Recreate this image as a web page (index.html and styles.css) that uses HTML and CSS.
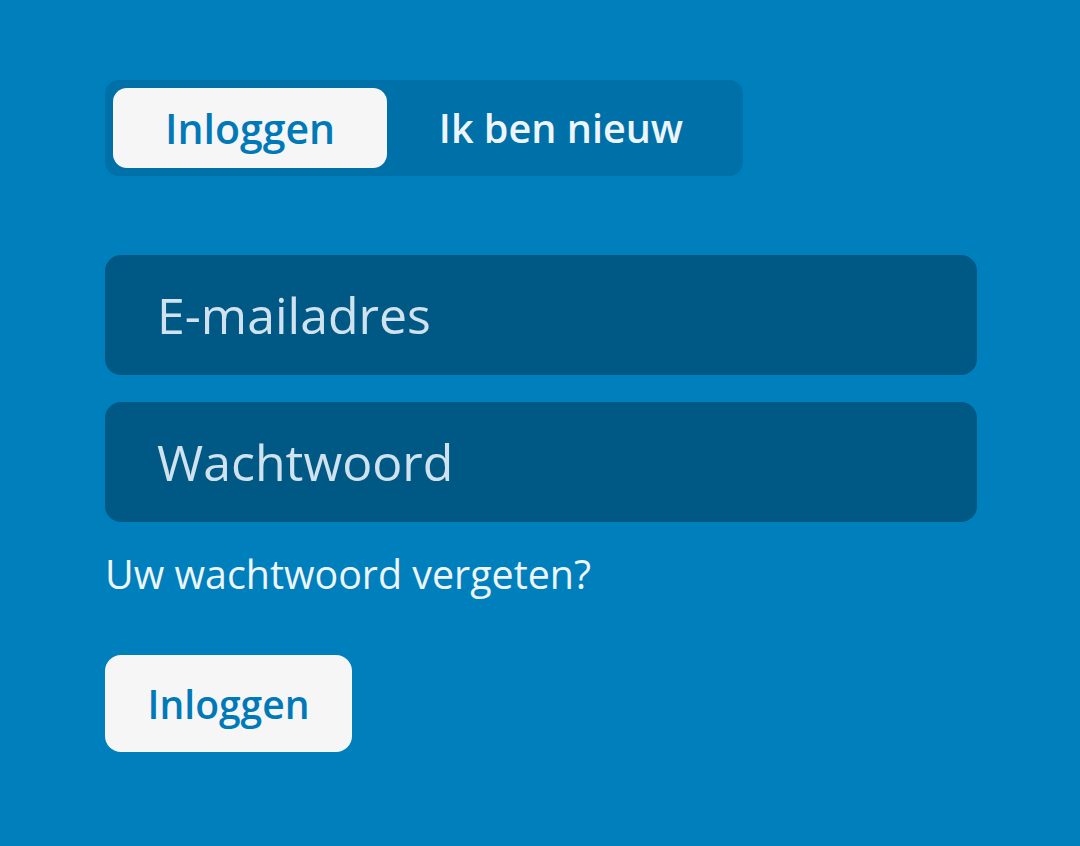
FILE: index.html
```html
<!DOCTYPE html>
<html lang="nl">
<head>
  <meta charset="UTF-8">
  <title>Inloggen</title>
  <link rel="stylesheet" href="styles.css">
</head>
<body>
  <div class="login">
    <div class="tabs">
      <button class="tab active">Inloggen</button>
      <button class="tab new">Ik ben nieuw</button>
    </div>
    <form class="form" onsubmit="return false">
      <input type="email" class="field" placeholder="E-mailadres" />
      <input type="password" class="field" placeholder="Wachtwoord" />
      <a href="#" class="forgot">Uw wachtwoord vergeten?</a>
      <button type="submit" class="submit">Inloggen</button>
    </form>
  </div>
</body>
</html>
```

FILE: styles.css
```css
body {
  margin: 0;
  min-height: 100vh;
  background: #007fbd;
  font-family: "Open Sans", sans-serif;
}
.login {
  padding: 80px 105px;
  display: flex;
  flex-direction: column;
  align-items: flex-start;
}
.tabs {
  display: flex;
  padding: 8px;
  background: #0070a8;
  border-radius: 14px;
}
.tab {
  border: none;
  background: transparent;
  font-family: inherit;
  font-size: 39.6px;
  font-weight: 600;
  color: #eef5fa;
  width: 274px;
  height: 80px;
  padding: 0;
  border-radius: 14px;
  cursor: pointer;
}
.tab.new {
  width: 348px;
}
.tab.active {
  background: #f6f6f6;
  color: #0079b9;
  font-size: 41px;
}
.form {
  margin-top: 79px;
  display: flex;
  flex-direction: column;
  align-items: flex-start;
  width: 872px;
}
.field {
  box-sizing: border-box;
  width: 100%;
  height: 120px;
  margin-bottom: 27px;
  padding: 0 52px;
  border: none;
  border-radius: 16px;
  background: #005985;
  font-family: inherit;
  font-size: 50px;
  color: #fff;
  outline: none;
}
.field::placeholder {
  color: #cfe2ee;
}
.field + .field {
  margin-bottom: 20px;
}
.forgot {
  font-size: 39.4px;
  color: #eef5fa;
  text-decoration: none;
  line-height: 64px;
}
.submit {
  box-sizing: border-box;
  width: 247px;
  margin-top: 49px;
  height: 97px;
  padding: 0;
  border: none;
  border-radius: 16px;
  background: #f6f6f6;
  font-family: inherit;
  font-size: 39px;
  font-weight: 600;
  color: #0079b9;
  cursor: pointer;
}
```
